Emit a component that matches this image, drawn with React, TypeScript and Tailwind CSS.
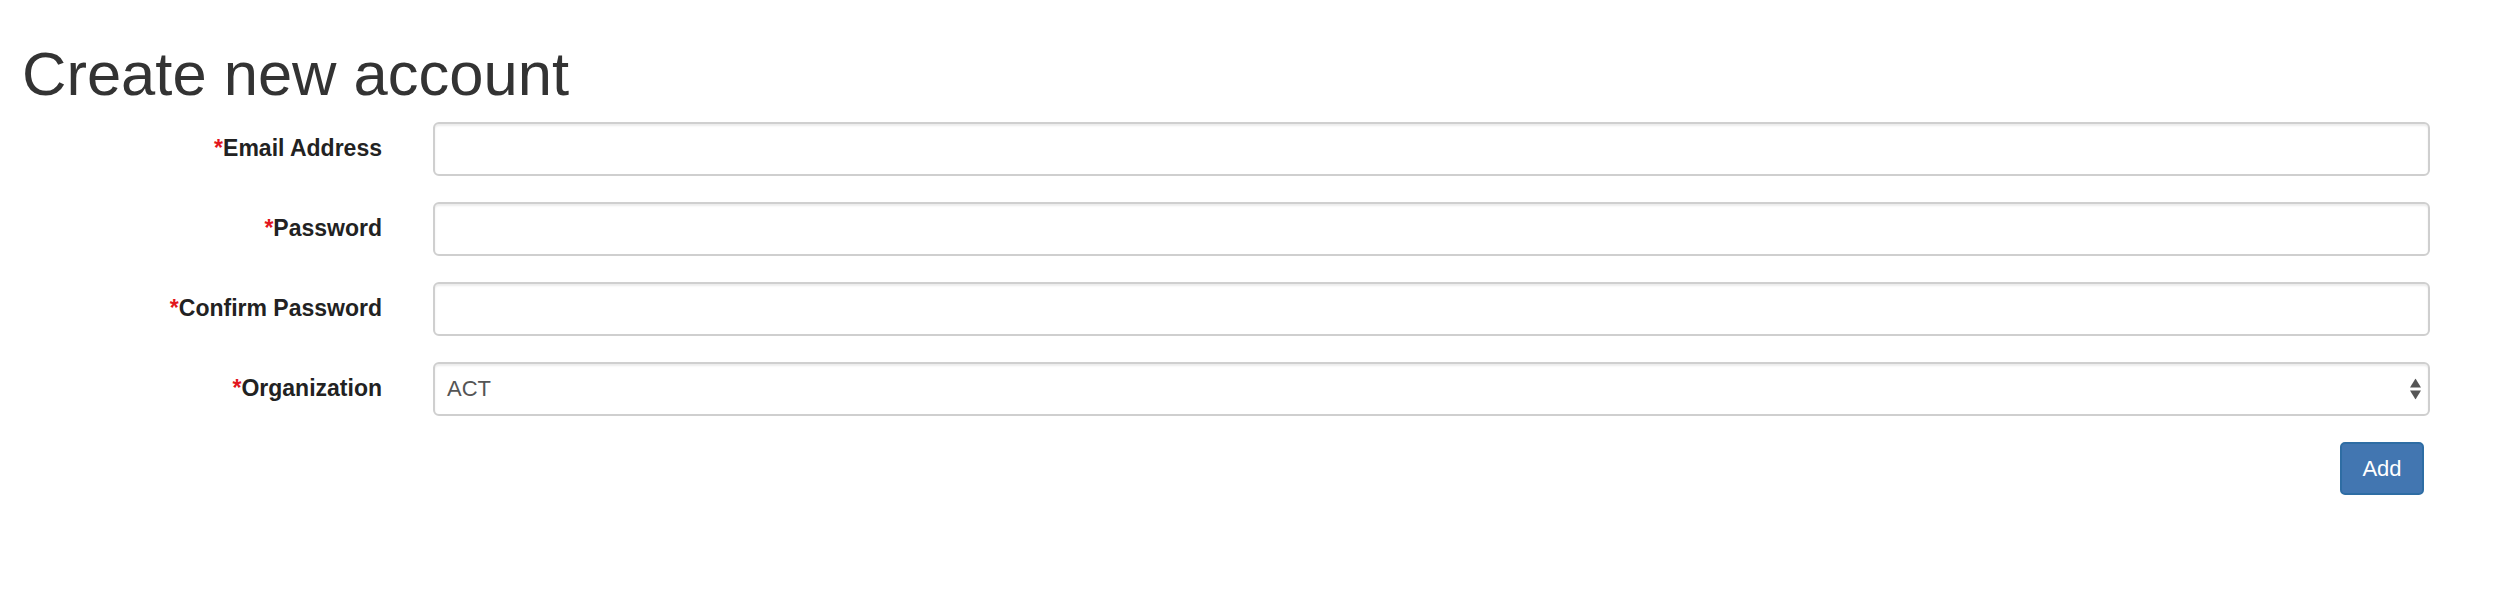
import React from "react";

const fields = [
  { label: "Email Address", type: "text" },
  { label: "Password", type: "password" },
  { label: "Confirm Password", type: "password" },
];

function Label({ text }: { text: string }) {
  return (
    <label className="w-[382px] shrink-0 text-right text-[23px] font-bold text-[#222]">
      <span className="text-[#e2171d]">*</span>
      {text}
    </label>
  );
}

export default function App() {
  return (
    <div className="min-h-[592px] bg-white font-['Liberation_Sans',Arial,sans-serif] text-[#333]">
      <h1 className="pl-[22px] pt-[43px] text-[61.5px] leading-none font-normal text-[#333]">
        Create new account
      </h1>
      <form className="mt-[17px] flex flex-col gap-[26px] pr-[70px]">
        {fields.map((f) => (
          <div key={f.label} className="flex items-center gap-[51px]">
            <Label text={f.label} />
            <input
              type={f.type}
              className="h-[54px] flex-1 rounded-[6px] border-2 border-[#cfcfcf] bg-white px-[19px] text-[22px] shadow-[inset_0_2px_2px_rgba(0,0,0,0.075)] outline-none"
            />
          </div>
        ))}
        <div className="flex items-center gap-[51px]">
          <Label text="Organization" />
          <div className="relative flex h-[54px] flex-1 items-center rounded-[6px] border-2 border-[#cfcfcf] bg-white pl-[12px] text-[22px] text-[#555] shadow-[inset_0_2px_2px_rgba(0,0,0,0.075)]">
            ACT
            <svg
              className="absolute right-[7px] top-1/2 -translate-y-1/2"
              width="11"
              height="21"
              viewBox="0 0 11 21"
            >
              <path d="M5.5 0 L11 9 L0 9 Z" fill="#555" />
              <path d="M0 12 L11 12 L5.5 21 Z" fill="#555" />
            </svg>
          </div>
        </div>
        <div className="flex justify-end pr-[6px]">
          <button
            type="button"
            className="h-[53px] w-[84px] rounded-[5px] border-2 border-[#2e6da4] bg-[#4276b1] text-[22px] text-white"
          >
            Add
          </button>
        </div>
      </form>
    </div>
  );
}
